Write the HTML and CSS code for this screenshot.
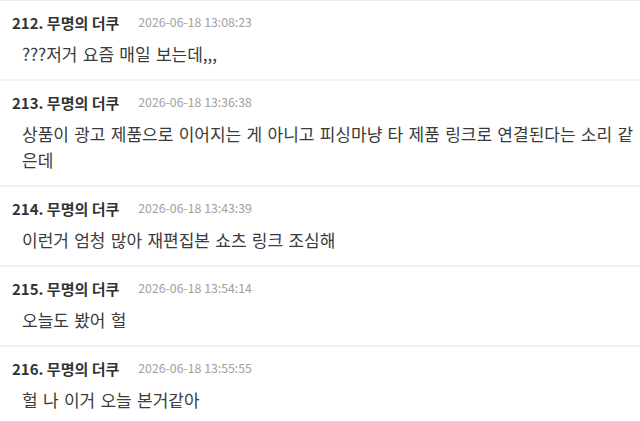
FILE: index.html
```html
<!DOCTYPE html>
<html>
<head>
    <title>댓글</title>
    <link rel="stylesheet" href="styles.css">
</head>
<body>
    <div class="comments">
        <div class="comment">
            <div class="comment-head">
                <span class="author">212. 무명의 더쿠</span>
                <span class="date">2026-06-18 13:08:23</span>
            </div>
            <div class="comment-body">???저거 요즘 매일 보는데,,,</div>
        </div>
        <div class="comment">
            <div class="comment-head">
                <span class="author">213. 무명의 더쿠</span>
                <span class="date">2026-06-18 13:36:38</span>
            </div>
            <div class="comment-body">상품이 광고 제품으로 이어지는 게 아니고 피싱마냥 타 제품 링크로 연결된다는 소리 같은데</div>
        </div>
        <div class="comment">
            <div class="comment-head">
                <span class="author">214. 무명의 더쿠</span>
                <span class="date">2026-06-18 13:43:39</span>
            </div>
            <div class="comment-body">이런거 엄청 많아 재편집본 쇼츠 링크 조심해</div>
        </div>
        <div class="comment">
            <div class="comment-head">
                <span class="author">215. 무명의 더쿠</span>
                <span class="date">2026-06-18 13:54:14</span>
            </div>
            <div class="comment-body">오늘도 봤어 헐</div>
        </div>
        <div class="comment">
            <div class="comment-head">
                <span class="author">216. 무명의 더쿠</span>
                <span class="date">2026-06-18 13:55:55</span>
            </div>
            <div class="comment-body">헐 나 이거 오늘 본거같아</div>
        </div>
    </div>
</body>
</html>
```

FILE: styles.css
```css
body {
    margin: 0;
    background: #fff;
    font-family: "Noto Sans CJK KR", "Noto Sans", sans-serif;
    color: #333;
}

.comments {
    border-top: 1px solid #ebebeb;
}

.comment {
    padding: 11px 6px 12px 12px;
    border-bottom: 2px solid #f0f0f0;
}

.comment-head {
    display: flex;
    align-items: center;
    gap: 19px;
    height: 20px;
}

.author {
    font-size: 15px;
    font-weight: bold;
    color: #333;
}

.date {
    font-size: 12.3px;
    color: #a0a0a0;
}

.comment-body {
    margin-top: 9px;
    padding-left: 10px;
    font-size: 17px;
    line-height: 26px;
    word-spacing: 1.5px;
    color: #3a3a3a;
}
```
